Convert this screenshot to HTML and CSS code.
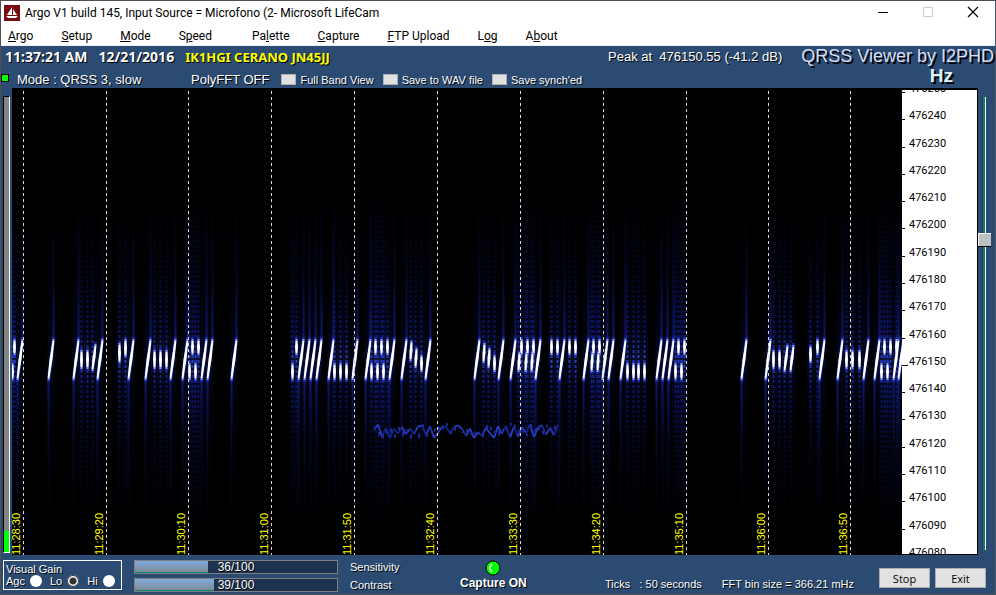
FILE: index.html
```html
<!DOCTYPE html>
<html lang="en">
<head>
    <meta charset="UTF-8">
    <meta name="viewport" content="width=device-width, initial-scale=1.0">
    <title>Argo V1 build 145</title>
    <link rel="stylesheet" href="styles.css">
</head>
<body>

    <div class="window">
        <header class="titlebar">
            <svg class="app-icon" viewBox="0 0 16 16">
                <rect width="16" height="16" fill="#7a0c10"/>
                <path d="M8 2v8H3zM9 4l4 6H9zM2 11h12l-2 2H4z" fill="#fff"/>
            </svg>
            <span class="title">Argo V1 build 145, Input Source = Microfono (2- Microsoft LifeCam</span>
            <button class="win-btn" type="button" aria-label="Minimize">
                <svg viewBox="0 0 12 12"><path d="M1 6.5h10" stroke="#000"/></svg>
            </button>
            <button class="win-btn" type="button" aria-label="Maximize" disabled>
                <svg viewBox="0 0 12 12"><path d="M1.500 1.500h9v9h-9z" stroke="#ccc"/></svg>
            </button>
            <button class="win-btn" type="button" aria-label="Close">
                <svg viewBox="0 0 12 12"><path d="M1 1l10 10M11 1L1 11" stroke="#000" stroke-width="1.200"/></svg>
            </button>
        </header>

        <nav class="menu">
            <a href="#"><u>A</u>rgo</a>
            <a href="#"><u>S</u>etup</a>
            <a href="#"><u>M</u>ode</a>
            <a href="#" class="wide">S<u>p</u>eed</a>
            <a href="#">Pa<u>l</u>ette</a>
            <a href="#"><u>C</u>apture</a>
            <a href="#"><u>F</u>TP Upload</a>
            <a href="#">L<u>o</u>g</a>
            <a href="#">A<u>b</u>out</a>
        </nav>

        <section class="info">
            <div class="info-row">
                <span class="clock">11:37:21 AM</span>
                <span class="date">12/21/2016</span>
                <span class="station">IK1HGI CERANO JN45JJ</span>
                <span class="peak">Peak at &nbsp;476150.55 (-41.2 dB)</span>
                <span class="brand">QRSS Viewer by I2PHD</span>
            </div>
            <div class="info-row options">
                <span class="led"></span>
                <span class="mode">Mode : QRSS 3, slow</span>
                <span class="poly">PolyFFT OFF</span>
                <label><input type="checkbox"> Full Band View</label>
                <label><input type="checkbox"> Save to WAV file</label>
                <label><input type="checkbox"> Save synch'ed</label>
                <span class="unit">Hz</span>
            </div>
        </section>

        <main class="viewer">
            <div class="level"><div class="level-fill"></div></div>
            <div class="plot">
                <svg id="spectrum" viewBox="12 88 890 467" preserveAspectRatio="none"></svg>
                <div id="times"></div>
            </div>
            <div class="scale"><ul id="freqs"></ul></div>
            <div class="tuner"><div class="thumb"></div></div>
        </main>

        <footer class="controls">
            <fieldset class="gain">
                <span>Visual Gain</span>
                <div class="gain-row">
                    <label>Agc <input type="radio" name="gain"></label>
                    <label>Lo <input type="radio" name="gain" checked></label>
                    <label>Hi <input type="radio" name="gain"></label>
                </div>
            </fieldset>
            <div class="sliders">
                <div class="bar"><div class="bar-fill" style="width: 36%"></div><span>36/100</span></div>
                <span class="bar-label">Sensitivity</span>
                <div class="bar"><div class="bar-fill" style="width: 39%"></div><span>39/100</span></div>
                <span class="bar-label">Contrast</span>
            </div>
            <div class="capture">
                <svg viewBox="0 0 16 16">
                    <circle cx="8" cy="8" r="7" fill="#0f0" stroke="#000"/>
                    <path d="M7 4Q3 8 7 12" fill="none" stroke="#fff" stroke-width="1.500"/>
                </svg>
                <strong>Capture ON</strong>
            </div>
            <div class="status">
                <span>Ticks &nbsp; : 50 seconds</span>
                <span>FFT bin size = 366.21 mHz</span>
            </div>
            <div class="buttons">
                <button type="button">Stop</button>
                <button type="button">Exit</button>
            </div>
        </footer>
    </div>

    <script src="script.js"></script>
</body>
</html>
```

FILE: styles.css
```css
* {
    box-sizing: border-box;
}

body {
    margin: 0;
    font-family: "Liberation Sans", Arial, sans-serif;
    font-size: 12px;
    color: #fff;
    background-color: #2b4b73;
}

.window {
    display: flex;
    flex-direction: column;
    min-height: 100vh;
    border: 1px solid #505050;
    border-right-color: #45586c;
}

/* title and menu */
.titlebar {
    display: flex;
    align-items: center;
    height: 24px;
    padding-left: 3px;
    background-color: #fff;
    color: #000;
    font-family: Roboto, sans-serif;
}

.app-icon {
    width: 16px;
    height: 16px;
    margin-right: 5px;
}

.title {
    flex: 1;
}

.win-btn {
    width: 45px;
    height: 24px;
    padding: 0;
    border: none;
    background: none;
}

.win-btn svg {
    width: 12px;
    height: 12px;
    fill: none;
}

.menu {
    display: flex;
    gap: 28px;
    height: 21px;
    padding-left: 7px;
    background-color: #fff;
    border-bottom: 1px solid #f0f0f0;
    font-family: Roboto, sans-serif;
    line-height: 22px;
}

.menu a {
    color: #000;
    text-decoration: none;
}

.menu .wide {
    margin-right: 12px;
}

/* info lines over the waterfall */
.info {
    height: 42px;
    text-shadow: 1px 1px 0 #000;
}

.info-row {
    display: flex;
    align-items: center;
    height: 21px;
    padding: 0 1px 0 4px;
    white-space: nowrap;
}

.clock,
.date,
.station {
    font-family: "Noto Sans", sans-serif;
    font-weight: bold;
    font-size: 14px;
    line-height: 16px;
    margin-right: 11px;
}

.station {
    font-size: 13px;
    color: #ff0;
}

.peak {
    margin-left: auto;
    margin-right: 19px;
    font-size: 13px;
}

.brand {
    font-size: 18px;
    color: #d5def5;
    text-shadow: 2px 2px 0 #000;
}

.options {
    padding: 4px 0 0;
}

.options label {
    display: flex;
    align-items: center;
    gap: 4px;
    margin-right: 9px;
    font-size: 11px;
}

.options input {
    appearance: none;
    width: 15px;
    height: 11px;
    margin: 0;
    border: 1px solid #b0b0b0;
    background-color: #e1e1e1;
}

.led {
    align-self: flex-start;
    width: 8px;
    height: 8px;
    margin-top: 3px;
    border: 1px solid #000;
    background-color: #0f0;
}

.mode,
.poly {
    font-size: 13px;
}

.mode {
    width: 174px;
    margin-left: 8px;
}

.poly {
    margin-right: 12px;
}

.unit {
    align-self: flex-start;
    margin-left: auto;
    margin-right: 42px;
    font-size: 19px;
    font-weight: bold;
    line-height: 10px;
    color: #dff5f5;
    text-shadow: 2px 2px 0 #000;
}

/* waterfall */
.viewer {
    display: flex;
    flex: 1;
}

.level {
    display: flex;
    align-items: flex-end;
    width: 7px;
    margin: 8px 2px 2px;
    border: 1px solid #000;
    border-right-color: #fff;
    border-bottom-color: #fff;
    background-color: #858585;
}

.level-fill {
    width: 100%;
    height: 21px;
    background-color: #0f0;
}

.plot {
    position: relative;
    flex: 1;
    overflow: hidden;
    background-color: #000;
}

.plot svg {
    position: absolute;
    width: 100%;
    height: 100%;
}

.time {
    position: absolute;
    bottom: 0;
    height: 42px;
    line-height: 12px;
    writing-mode: vertical-rl;
    transform: rotate(180deg) translateX(100%);
    font-size: 11px;
    color: #ff0;
}

.scale {
    display: flex;
    width: 76px;
    overflow: hidden;
    background-color: #fff;
    border: 1px solid #000;
    border-width: 2px 1px 1px 0;
    color: #000;
}

.scale ul {
    display: flex;
    flex-direction: column;
    justify-content: space-between;
    margin: -8px 0 -6px;
    padding: 0;
    list-style: none;
    font-family: Roboto, sans-serif;
    font-size: 11px;
    line-height: 14px;
}

.scale li {
    display: flex;
    align-items: center;
}

.scale li::before {
    content: "";
    width: 3px;
    height: 7px;
    margin-right: 4px;
    border-bottom: 1px solid #000;
}

.scale .center::before {
    width: 6px;
    margin-right: 1px;
}

.tuner {
    position: relative;
    width: 17px;
    background: linear-gradient(90deg, #333 1px, #008080 1px, #008080 3px, #fff 3px) no-repeat 4px 9px / 4px calc(100% - 14px);
}

.thumb {
    position: absolute;
    top: 31%;
    left: 0;
    width: 13px;
    height: 13px;
    background-color: #c0c0c0;
    border: 1px solid #fff;
    border-width: 1px 0 0 1px;
    box-shadow: 0 1px 0 #000;
}

/* bottom panel */
.controls {
    display: flex;
    align-items: flex-start;
    height: 39px;
    padding: 5px 9px 0 2px;
    text-shadow: 1px 1px 0 #000;
    white-space: nowrap;
}

.gain {
    width: 119px;
    height: 30px;
    margin: 0 12px 0 0;
    padding: 2px;
    border: 1px solid #fff;
    font-size: 11px;
    line-height: 12px;
}

.gain-row {
    display: flex;
    gap: 8px;
}

.gain label {
    display: flex;
    align-items: center;
    gap: 5px;
}

.gain input {
    appearance: none;
    width: 12px;
    height: 12px;
    margin: 0;
    border-radius: 50%;
    background-color: #fff;
}

.gain input:checked {
    background: radial-gradient(circle, #333 3px, #fff 4px);
    box-shadow: inset 0 0 0 1px #333;
}

.sliders {
    display: grid;
    grid-template-columns: 204px 48px;
    gap: 4px 12px;
}

.bar {
    position: relative;
    height: 14px;
    border: 1px solid #808080;
    background-color: #1d324d;
}

.bar-fill {
    height: 100%;
    border-bottom: 1px solid #008080;
    background: linear-gradient(#80abe0, #808c94);
}

.bar span {
    position: absolute;
    top: 0;
    left: 0;
    width: 100%;
    text-align: center;
    line-height: 12px;
}

.bar-label {
    font-size: 11px;
    line-height: 14px;
}

.capture {
    display: flex;
    flex-direction: column;
    align-items: center;
    margin-left: 62px;
    line-height: 14px;
}

.capture svg {
    width: 16px;
    height: 16px;
}

.status {
    display: flex;
    gap: 20px;
    margin-top: 18px;
    margin-left: auto;
    font-size: 11px;
    line-height: 13px;
}

.buttons {
    display: flex;
    gap: 5px;
    margin-top: 8px;
    margin-left: 25px;
}

.buttons button {
    width: 51px;
    height: 20px;
    padding: 0;
    border: 1px solid #adadad;
    background-color: #e1e1e1;
    font-family: "Open Sans", sans-serif;
    font-size: 11px;
}
```

FILE: script.js
```js
const svg = document.getElementById('spectrum');

// key-down marks: full slashes, then short marks as [x, top, bottom, lean]
const slashes = [17, 48, 73, 97, 128, 145, 170, 182, 201, 207, 231, 298, 304, 310, 316,
    328, 352, 365, 389, 401, 425, 474, 498, 510, 535, 559, 583, 602, 608, 620,
    656, 662, 668, 741, 765, 819, 837, 863, 874, 893, 898];
const highs = [14, 192, 198, 296, 375, 381, 387, 521, 527, 533, 551, 557, 569, 575,
    593, 599, 678, 684, 817, 884, 890, 896];
const lows = [12, 189, 195, 292, 334, 340, 346, 371, 377, 383, 627, 633, 638, 644,
    675, 681, 881, 887];
const mids = [81, 87, 154, 160, 166, 773, 779, 846, 852, 859];
const others = [[92, 346, 369, 3], [119, 345, 361, 0], [125, 341, 355, 0],
    [410, 343, 359, 1], [415, 350, 366, 1], [421, 357, 370, 0],
    [483, 345, 361, 1], [488, 350, 366, 1], [494, 357, 370, 0],
    [518, 354, 370, 1], [525, 354, 370, 1], [531, 354, 370, 1],
    [591, 354, 370, 1], [597, 354, 370, 1], [784, 347, 370, 3], [790, 347, 370, 3],
    [810, 348, 361, 0]];

const marks = [
    ...slashes.map(x => [x, 341, 378, 5]),
    ...highs.map(x => [x, 341, 353, 0]),
    ...lows.map(x => [x, 365, 378, 0]),
    ...mids.map(x => [x, 352, 367, 0]),
    ...others
];

const defs = `<defs><linearGradient id="streak" gradientUnits="userSpaceOnUse" x1="0" y1="190" x2="0" y2="530">
    <stop offset="0" stop-color="#0a1460" stop-opacity="0"/>
    <stop offset="0.25" stop-color="#0a1460" stop-opacity="0.3"/>
    <stop offset="0.42" stop-color="#101c80" stop-opacity="0.75"/>
    <stop offset="0.5" stop-color="#2a40c0"/>
    <stop offset="0.58" stop-color="#101c80" stop-opacity="0.75"/>
    <stop offset="0.75" stop-color="#0a1460" stop-opacity="0.3"/>
    <stop offset="1" stop-color="#0a1460" stop-opacity="0"/>
</linearGradient></defs>`;

let streaks = '';
let glow = '';
let core = '';
marks.forEach(([x, top, bottom, lean]) => {
    const full = lean === 5;
    const x1 = x + 0.5;
    const x2 = x + lean + 0.5;
    // halo of the whole column, then the side lobes above and below the mark
    streaks += `<path d="M${x1 + lean / 2} 190V530" stroke="url(#streak)" stroke-width="7" opacity="0.15"/>`;
    streaks += full
        ? `<path d="M${x1} 372V530M${x2} 190V346" stroke="url(#streak)" stroke-width="2"/>`
        : `<path d="M${x1} 190V530" stroke="url(#streak)" stroke-width="2" stroke-dasharray="3 2"/>`;
    glow += `<path d="M${x1} ${bottom + 4}L${x2} ${top - 4}" stroke="#1a2cb0" stroke-width="3" opacity="0.8"/>`;
    glow += `<path d="M${x1} ${bottom + 2}L${x2} ${top - 2}" stroke="#8c9cf0" stroke-width="2"/>`;
    // white body, wider in its middle
    const w = 1.5;
    const mid = (top + bottom) / 2;
    const xm = (x1 + x2) / 2;
    core += `<path d="M${x1 - 0.8} ${bottom}L${xm - w} ${mid}L${x2 - 0.8} ${top}H${x2 + 0.8}L${xm + w} ${mid}L${x1 + 0.8} ${bottom}z" fill="#fff"/>`;
});

// weak drifting signal under the main one
let seed = 4242;
function rand() {
    seed = (seed * 16807) % 2147483647;
    return seed / 2147483647;
}

let weak = '';
let y = 430;
let up = true;
for (let x = 374; x < 556; x += 4) {
    const next = up ? 424 + rand() * 5 : 432 + rand() * 6;
    const shade = rand() > 0.5 ? '#2a3cb8' : '#18248c';
    weak += `<path d="M${x} ${y}L${x + 4} ${next}" stroke="${shade}" stroke-width="1.8"/>`;
    weak += `<path d="M${x + 1} ${423 + rand() * 12}v${2 + rand() * 3}" stroke="#1a2898" stroke-width="2"/>`;
    y = next;
    if (rand() > 0.2) {
        up = !up;
    }
}

let ticks = '';
const lines = [23, 106, 188, 271, 354, 437, 520, 603, 686, 768, 850];
lines.forEach(x => {
    ticks += `<path d="M${x + 0.5} 91V555" stroke="#d8d8d8" stroke-dasharray="3 3"/>`;
});

svg.innerHTML = defs + `<g fill="none">${streaks}${glow}${core}${weak}${ticks}</g>`;

const names = ['11:28:30', '11:29:20', '11:30:10', '11:31:00', '11:31:50', '11:32:40',
    '11:33:30', '11:34:20', '11:35:10', '11:36:00', '11:36:50'];
document.getElementById('times').innerHTML = names.map((name, i) =>
    `<span class="time" style="left: ${(lines[i] - 13) / 890 * 100}%">${name}</span>`).join('');

let freqs = '';
for (let f = 476250; f >= 476080; f -= 10) {
    freqs += `<li${f === 476150 ? ' class="center"' : ''}>${f}</li>`;
}
document.getElementById('freqs').innerHTML = freqs;
```
